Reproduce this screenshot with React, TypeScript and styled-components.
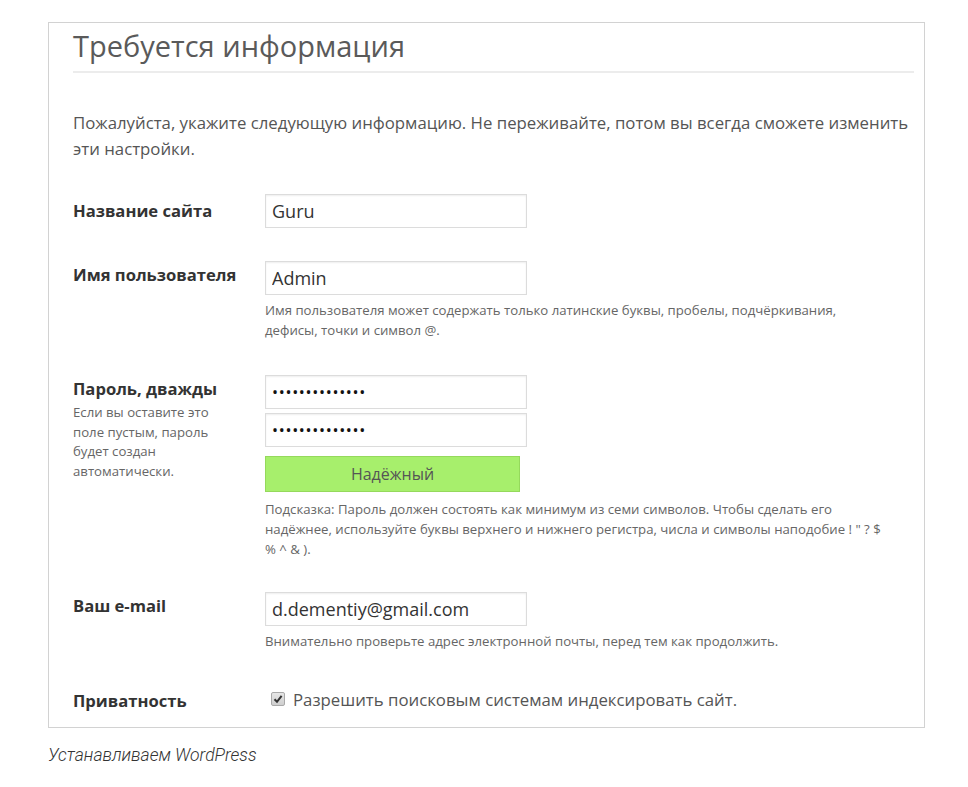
import React from "react";
import styled, { createGlobalStyle } from "styled-components";

const Global = createGlobalStyle`
  html, body { margin: 0; padding: 0; background: #fff; }
  body { font-family: "Open Sans", "Noto Sans", sans-serif; color: #444; }
  * { box-sizing: border-box; }
`;

const Page = styled.div`
  padding: 22px 0 0 48px;
  width: 968px;
`;

const Frame = styled.section`
  width: 877px;
  border: 1px solid #d2d2d2;
  padding: 2px 10px 16px 24px;
`;

const Heading = styled.h1`
  margin: 0;
  font-weight: 400;
  font-size: 29px;
  line-height: 42px;
  color: #5a5a5a;
  padding: 0 0 4px 0;
  border-bottom: 2px solid #ececec;
`;

const Intro = styled.p`
  margin: 37px 0 0 0;
  font-size: 16.8px;
  line-height: 26px;
  color: #555;
`;

const Form = styled.div`
  margin-top: 32px;
  display: flex;
  flex-direction: column;
  gap: 33px;
`;

const Row = styled.div<{ $gap?: number }>`
  display: grid;
  grid-template-columns: 192px 1fr;
  align-items: start;
  margin-top: ${(p) => (p.$gap ?? 0)}px;
`;

const LabelCol = styled.div<{ $pt: number }>`
  padding-top: ${(p) => p.$pt}px;
`;

const Label = styled.div`
  font-weight: 700;
  font-size: 16.6px;
  line-height: 20px;
  color: #333;
`;

const SideNote = styled.div`
  margin-top: 4px;
  font-size: 13.2px;
  line-height: 19.7px;
  color: #666;
  width: 150px;
`;

const Field = styled.div`
  display: flex;
  flex-direction: column;
  align-items: flex-start;
`;

const Input = styled.input<{ $mt?: number }>`
  width: 262px;
  height: 34px;
  margin: ${(p) => p.$mt ?? 0}px 0 0 0;
  padding: 0 6px;
  border: 1px solid #dcdcdc;
  box-shadow: inset 0 1px 2px rgba(0, 0, 0, 0.07);
  font-family: "Open Sans", "Noto Sans", sans-serif;
  font-size: 18px;
  color: #333;
  background: #fff;
  outline: none;
  &[type="password"] {
    font-size: 16px;
    letter-spacing: 0.7px;
    color: #111;
  }
`;

const Help = styled.p<{ $mt: number; $w?: number }>`
  margin: ${(p) => p.$mt}px 0 0 0;
  font-size: 13.2px;
  line-height: 20px;
  color: #666;
  max-width: ${(p) => p.$w ?? 620}px;
`;

const Strength = styled.div`
  margin-top: 9px;
  width: 255px;
  height: 36px;
  background: #a7ef6c;
  border: 1px solid #95d95c;
  color: #555;
  font-size: 16px;
  display: flex;
  align-items: center;
  justify-content: center;
`;

const CheckLine = styled.label`
  display: flex;
  align-items: center;
  gap: 8px;
  padding-left: 6px;
  height: 24px;
  font-size: 16.8px;
  color: #555;
`;

const Box = styled.span`
  width: 14px;
  height: 14px;
  border: 1px solid #a9a9a9;
  border-radius: 2px;
  background: linear-gradient(#e6e6e6, #cfcfcf);
  display: inline-flex;
  align-items: center;
  justify-content: center;
`;

const Caption = styled.p`
  margin: 16px 0 0 0;
  font-family: Roboto, "Noto Sans", sans-serif;
  font-style: italic;
  font-weight: 300;
  font-size: 17.5px;
  line-height: 22px;
  color: #333;
`;

export default function App() {
  return (
    <Page>
      <Global />
      <Frame>
        <Heading>Требуется информация</Heading>
        <Intro>
          Пожалуйста, укажите следующую информацию. Не переживайте, потом вы всегда сможете изменить
          эти настройки.
        </Intro>
        <Form>
          <Row>
            <LabelCol $pt={7}>
              <Label>Название сайта</Label>
            </LabelCol>
            <Field>
              <Input type="text" defaultValue="Guru" readOnly />
            </Field>
          </Row>
          <Row>
            <LabelCol $pt={4}>
              <Label>Имя пользователя</Label>
            </LabelCol>
            <Field>
              <Input type="text" defaultValue="Admin" readOnly />
              <Help $mt={5} $w={600}>
                Имя пользователя может содержать только латинские буквы, пробелы, подчёркивания,
                дефисы, точки и символ @.
              </Help>
            </Field>
          </Row>
          <Row $gap={2}>
            <LabelCol $pt={4}>
              <Label>Пароль, дважды</Label>
              <SideNote>
                Если вы оставите это поле пустым, пароль будет создан автоматически.
              </SideNote>
            </LabelCol>
            <Field>
              <Input type="password" defaultValue="aaaaaaaaaaaaaa" readOnly />
              <Input type="password" defaultValue="aaaaaaaaaaaaaa" readOnly $mt={4} />
              <Strength>Надёжный</Strength>
              <Help $mt={7} $w={622}>
                Подсказка: Пароль должен состоять как минимум из семи символов. Чтобы сделать его
                надёжнее, используйте буквы верхнего и нижнего регистра, числа и символы наподобие ! " ? $
                % ^ &amp; ).
              </Help>
            </Field>
          </Row>
          <Row>
            <LabelCol $pt={4}>
              <Label>Ваш e-mail</Label>
            </LabelCol>
            <Field>
              <Input type="text" defaultValue="d.dementiy@gmail.com" readOnly />
              <Help $mt={5}>
                Внимательно проверьте адрес электронной почты, перед тем как продолжить.
              </Help>
            </Field>
          </Row>
          <Row $gap={3}>
            <LabelCol $pt={4}>
              <Label>Приватность</Label>
            </LabelCol>
            <Field>
              <CheckLine>
                <Box>
                  <svg width="10" height="10" viewBox="0 0 10 10">
                    <path d="M1.5 5.2 L4 7.8 L8.6 1.8" fill="none" stroke="#333" strokeWidth="2" />
                  </svg>
                </Box>
                Разрешить поисковым системам индексировать сайт.
              </CheckLine>
            </Field>
          </Row>
        </Form>
      </Frame>
      <Caption>Устанавливаем WordPress</Caption>
    </Page>
  );
}
